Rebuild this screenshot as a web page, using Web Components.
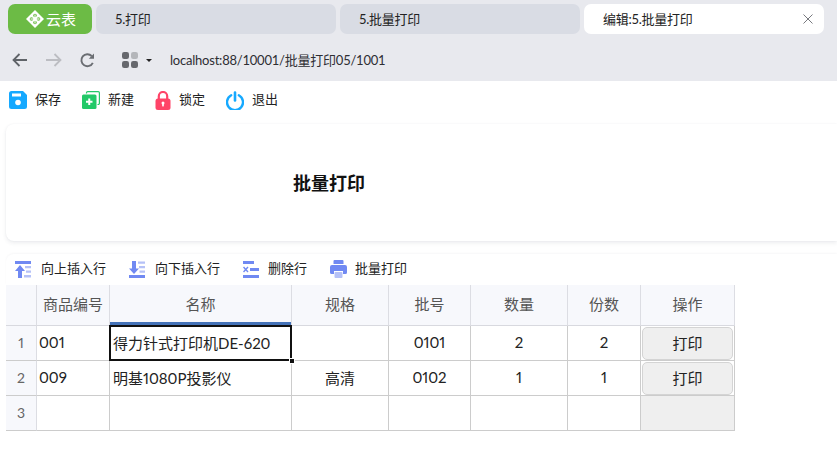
<!DOCTYPE html>
<html lang="zh">
<head>
<meta charset="utf-8">
<title>批量打印</title>
<style>
  html,body{margin:0;height:100%;overflow:hidden;background:#fff;}
  body{font-family:"Lato","Noto Sans CJK SC",sans-serif;font-size:13px;color:#222;}
</style>
</head>
<body>
<browser-bar>
  <browser-tab kind="logo">云表</browser-tab>
  <browser-tab>5.打印</browser-tab>
  <browser-tab>5.批量打印</browser-tab>
  <browser-tab kind="active">编辑:5.批量打印</browser-tab>
</browser-bar>
<tool-bar>
  <tool-btn icon="save">保存</tool-btn>
  <tool-btn icon="add">新建</tool-btn>
  <tool-btn icon="lock">锁定</tool-btn>
  <tool-btn icon="power">退出</tool-btn>
</tool-bar>
<title-card>批量打印</title-card>
<grid-tools>
  <tool-btn icon="up" gap="10">向上插入行</tool-btn>
  <tool-btn icon="down" gap="10">向下插入行</tool-btn>
  <tool-btn icon="del" gap="9">删除行</tool-btn>
  <tool-btn icon="print" gap="8">批量打印</tool-btn>
</grid-tools>
<data-sheet></data-sheet>

<script>
const ICONS = {
  save: `<svg width="18" height="18" viewBox="0 0 18 18"><path fill="#16a9ff" d="M2.500 0H14l4 4v11.500a2.500 2.500 0 0 1-2.500 2.500h-13A2.500 2.500 0 0 1 0 15.500v-13A2.500 2.500 0 0 1 2.500 0Z"/><rect x="3" y="2.500" width="9" height="3" fill="#fff"/><circle cx="9" cy="11.500" r="2.800" fill="#fff"/></svg>`,
  add: `<svg width="18" height="18" viewBox="0 0 18 18"><path fill="none" stroke="#22c968" stroke-width="1.200" d="M4.500 2.500V1.800A1.200 1.200 0 0 1 5.700.6h10.500a1.200 1.200 0 0 1 1.200 1.200v10.500a1.200 1.200 0 0 1-1.200 1.200h-.7"/><rect y="3.500" width="14.500" height="14.500" rx="1.500" fill="#22c968"/><path stroke="#fff" stroke-width="2" d="M7.250 7.500v6.500M4 10.750h6.500"/></svg>`,
  lock: `<svg width="16" height="19" viewBox="0 0 16 19"><path fill="none" stroke="#ff4468" stroke-width="2.200" d="M3.800 9V5.200a4.200 4.200 0 0 1 8.400 0V9"/><rect x=".5" y="7.500" width="15" height="11.500" rx="2.500" fill="#ff4468"/><circle cx="8" cy="12" r="1.500" fill="#fff"/><rect x="7.200" y="12" width="1.600" height="3.400" fill="#fff"/></svg>`,
  power: `<svg width="18" height="19" viewBox="0 0 18 19"><path fill="none" stroke="#16a9ff" stroke-width="2.400" stroke-linecap="round" d="M5.200 4.200a8 8 0 1 0 7.600 0"/><path stroke="#16a9ff" stroke-width="2.600" stroke-linecap="round" d="M9 1.500v8"/></svg>`,
  up: `<svg width="16" height="17" viewBox="0 0 16 17"><rect width="16" height="3" fill="#7089f2"/><path fill="#7089f2" d="M5 4 10 10H7v7H3v-7H0Z"/><path fill="#b5c1f7" d="M10 5h6v2.200h-6zM11 9.500h5v2.200h-5zM9 14h7v2.500H9z"/></svg>`,
  down: `<svg width="16" height="17" viewBox="0 0 16 17"><path fill="#7089f2" d="M3 0h4v7.500h3L5 13 0 7.500h3Z"/><rect y="14" width="16" height="3" fill="#7089f2"/><path fill="#b5c1f7" d="M9 .5h7v2.200H9zM10 5h6v2.200h-6zM10.500 9.500H16v2.200h-5.500z"/></svg>`,
  del: `<svg width="16" height="17" viewBox="0 0 16 17"><rect width="11" height="3" fill="#7089f2"/><rect y="14" width="16" height="3" fill="#7089f2"/><rect x="7" y="7" width="9" height="3" fill="#7089f2"/><path stroke="#7089f2" stroke-width="1.400" d="M.5 6 5 11M5 6 .5 11"/></svg>`,
  print: `<svg width="17" height="18" viewBox="0 0 17 18"><path fill="#7089f2" d="M4.500 0h8a1 1 0 0 1 1 1v3h-10V1a1 1 0 0 1 1-1Z"/><path fill="#7089f2" d="M2 5h13a2 2 0 0 1 2 2v5.500a1.500 1.500 0 0 1-1.500 1.500H13v-3H4v3H1.500A1.500 1.500 0 0 1 0 12.500V7a2 2 0 0 1 2-2Z"/><rect x="4.500" y="12" width="8" height="6" rx="1" fill="#b5c1f7"/></svg>`
}

class BrowserBar extends HTMLElement {
  constructor () {
    super()
    this.attachShadow({ mode: 'open' })
  }

  connectedCallback () {
    this.shadowRoot.innerHTML = `
      <style>
        :host{display:block;height:81px;background:#e8e9ee;box-sizing:border-box;padding:4px 8px 0;}
        .tabs{display:flex;gap:4px;height:30px;}
        .addr{display:flex;align-items:center;box-sizing:border-box;height:47px;padding:5px 0 0 4px;}
        svg{display:block;flex:none;}
        .url{font-size:13px;letter-spacing:-.22px;color:#2e2e33;margin:-2px 0 0 18px;white-space:nowrap;}
      </style>
      <div class="tabs"><slot></slot></div>
      <div class="addr">
        <svg width="15" height="14" viewBox="0 0 15 14"><path fill="none" stroke="#5f6368" stroke-width="1.800" d="M15 7H1.500M7.500 1 1.500 7l6 6"/></svg>
        <svg style="margin-left:19px" width="16" height="14" viewBox="0 0 16 14"><path fill="none" stroke="#bcbdc2" stroke-width="1.800" d="M0 7h14.500M8.500 1l6 6-6 6"/></svg>
        <svg style="margin-left:18px" width="15" height="15" viewBox="0 0 15 15"><path fill="none" stroke="#6a6d72" stroke-width="1.900" d="M12.800 9.800A6 6 0 1 1 11.700 3"/><path fill="#6a6d72" d="M14 .6v5.200H8.800Z"/></svg>
        <svg style="margin-left:27px" width="16" height="16" viewBox="0 0 16 16"><rect width="7" height="7" rx="2.200" fill="#66686d"/><rect x="9" width="7" height="7" rx="2.200" fill="#b4b6ba"/><rect y="9" width="7" height="7" rx="2.200" fill="#66686d"/><rect x="9" y="9" width="7" height="7" rx="2.200" fill="#66686d"/></svg>
        <svg style="margin-left:8px" width="6" height="3" viewBox="0 0 6 3"><path fill="#222" d="M0 0h6L3 3Z"/></svg>
        <span class="url">localhost:88/10001/批量打印05/1001</span>
      </div>`
  }
}

class BrowserTab extends HTMLElement {
  constructor () {
    super()
    this.attachShadow({ mode: 'open' })
  }

  connectedCallback () {
    const kind = this.getAttribute('kind')
    let before = ''
    let after = ''
    if (kind === 'logo') {
      before = `<svg width="18" height="18" viewBox="0 0 18 18"><path fill="#fff" d="M9 0 18 9 9 18 0 9Z"/><g fill="#6cbb45"><circle cx="9" cy="5.500" r="1.800"/><circle cx="5.500" cy="9" r="1.800"/><circle cx="12.500" cy="9" r="1.800"/><circle cx="9" cy="12.500" r="1.800"/></g><path stroke="#fff" stroke-width="1" d="M9 4.500v9M4.500 9h9"/></svg>`
    }
    if (kind === 'active') {
      after = `<svg class="x" width="10" height="10" viewBox="0 0 10 10"><path stroke="#77797e" stroke-width="1" fill="none" d="M.5.500l9 9M9.500.500l-9 9"/></svg>`
    }
    this.shadowRoot.innerHTML = `
      <style>
        :host{display:flex;flex:0 0 240px;align-items:center;box-sizing:border-box;height:30px;padding-left:19px;border-radius:7px;background:#d9dce4;font-size:13px;letter-spacing:-.25px;color:#222;}
        :host([kind=logo]){flex:0 0 84px;padding-left:18px;background:#6cbb45;color:#fff;font-size:15px;letter-spacing:0;gap:2px;}
        :host([kind=active]){background:#fff;}
        span{flex:1;white-space:nowrap;margin-top:-2px;}
        svg{display:block;flex:none;}
        .x{margin-right:11px;}
      </style>
      ${before}<span><slot></slot></span>${after}`
  }
}

class ToolBar extends HTMLElement {
  constructor () {
    super()
    this.attachShadow({ mode: 'open' })
  }

  connectedCallback () {
    this.shadowRoot.innerHTML = `
      <style>
        :host{display:flex;align-items:center;gap:21px;height:38px;padding-left:9px;}
      </style>
      <slot></slot>`
  }
}

class ToolBtn extends HTMLElement {
  constructor () {
    super()
    this.attachShadow({ mode: 'open' })
  }

  connectedCallback () {
    const gap = this.getAttribute('gap') || '8'
    this.shadowRoot.innerHTML = `
      <style>
        :host{display:flex;align-items:center;gap:${gap}px;font-size:13px;line-height:18px;color:#222;white-space:nowrap;}
        svg{display:block;flex:none;}
        span{display:block;margin-top:-3px;}
      </style>
      ${ICONS[this.getAttribute('icon')]}<span><slot></slot></span>`
  }
}

class TitleCard extends HTMLElement {
  constructor () {
    super()
    this.attachShadow({ mode: 'open' })
  }

  connectedCallback () {
    this.shadowRoot.innerHTML = `
      <style>
        :host{display:flex;align-items:center;box-sizing:border-box;height:117px;margin:5px 0 0 6px;padding:0 0 1px 287px;background:#fff;border-radius:8px 0 0 8px;box-shadow:0 2px 4px rgba(40,50,80,.09),0 0 2px rgba(40,50,80,.05);font-size:18px;font-weight:700;color:#111;}
      </style>
      <slot></slot>`
  }
}

class GridTools extends HTMLElement {
  constructor () {
    super()
    this.attachShadow({ mode: 'open' })
  }

  connectedCallback () {
    this.shadowRoot.innerHTML = `
      <style>
        :host{display:flex;align-items:center;gap:23px;box-sizing:border-box;height:31px;margin:13px 0 0 6px;padding:0 0 1px 9px;border-radius:8px 0 0 0;box-shadow:0 -1px 2px rgba(40,50,80,.04);}
      </style>
      <slot></slot>`
  }
}

class DataSheet extends HTMLElement {
  constructor () {
    super()
    this.attachShadow({ mode: 'open' })
  }

  connectedCallback () {
    const heads = ['', '商品编号', '名称', '规格', '批号', '数量', '份数', '操作']
    const rows = [
      ['1', '001', '得力针式打印机DE-620', '', '0101', '2', '2', 'btn'],
      ['2', '009', '明基1080P投影仪', '高清', '0102', '1', '1', 'btn'],
      ['3', '', '', '', '', '', '', '']
    ]
    let html = heads.map((h, i) => `<div class="c h${i === 2 ? ' sel' : ''}">${h}</div>`).join('')
    rows.forEach((r, ri) => {
      r.forEach((v, i) => {
        if (i === 0) html += `<div class="c n">${v}</div>`
        else if (i === 7) html += v ? `<div class="c b"><button>打印</button></div>` : `<div class="c off"></div>`
        else if (i === 1) html += `<div class="c l first">${v}</div>`
        else if (i === 2) html += `<div class="c l${ri === 0 ? ' cur' : ''}">${v}</div>`
        else html += `<div class="c">${v}</div>`
      })
    })
    this.shadowRoot.innerHTML = `
      <style>
        :host{display:block;position:relative;margin-left:6px;width:729px;}
        .g{display:grid;grid-template-columns:31px 73px 182px 97px 82px 97px 73px 94px;grid-template-rows:41px 35px 35px 35px;font-size:15px;color:#222;font-variant-numeric:proportional-nums;}
        .c{position:relative;display:flex;align-items:center;justify-content:center;box-sizing:border-box;padding-bottom:2px;border-right:1px solid #ccc;border-bottom:1px solid #ccc;white-space:nowrap;}
        .h{background:#f7f8fc;color:#555;padding-bottom:4px;border-right-color:#dcdde3;border-bottom-color:#d8d9df;}
        .sel{box-shadow:inset 0 -3px 0 #4472b8;}
        .n{background:#f7f8fc;color:#666;font-size:14px;border-right-color:#dcdde3;}
        .l{justify-content:flex-start;padding-left:3px;}
        .first{padding-left:2px;}
        .cur::after{content:"";position:absolute;inset:-1px;border:2px solid #111;pointer-events:none;}
        .cur::before{content:"";position:absolute;right:-4px;bottom:-4px;width:4px;height:4px;background:#111;border:1px solid #fff;z-index:1;}
        .off{background:#efefef;padding:0;}
        .b{background:#fff;padding:1px 1px 0 1px;}
        button{width:100%;height:33px;box-sizing:border-box;border:1px solid #d4d4d4;border-radius:5px;background:#efefef;font:inherit;color:#222;padding:0 0 3px;}
      </style>
      <div class="g">${html}</div>`
  }
}

customElements.define('browser-bar', BrowserBar)
customElements.define('browser-tab', BrowserTab)
customElements.define('tool-bar', ToolBar)
customElements.define('tool-btn', ToolBtn)
customElements.define('title-card', TitleCard)
customElements.define('grid-tools', GridTools)
customElements.define('data-sheet', DataSheet)
</script>
</body>
</html>
